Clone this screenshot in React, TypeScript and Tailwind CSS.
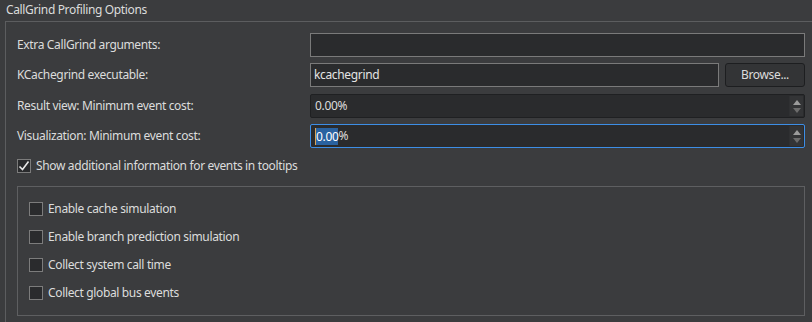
import React from "react";

const font = { fontFamily: '"Noto Sans", "Open Sans", sans-serif' };

function SpinBox({ focused, children }: { focused?: boolean; children: React.ReactNode }) {
  return (
    <div
      className={`flex h-[24px] w-[495px] items-stretch rounded-[2px] border bg-[#2a2b2d] ${
        focused ? "border-[#3d8ee6]" : "border-[#1f2022]"
      }`}
    >
      <div className="flex flex-1 items-center pl-[4px] text-[12px] text-[#dcdcdc]">{children}</div>
      <div className="my-[1px] mr-[1px] flex w-[14px] flex-col items-center justify-center gap-[3px] border-l border-[#2f3032] bg-[#333436]">
        <svg width="8" height="5" viewBox="0 0 8 5">
          <path d="M0 5 L4 0 L8 5 Z" fill="#9c9c9c" />
        </svg>
        <svg width="8" height="5" viewBox="0 0 8 5">
          <path d="M0 0 L4 5 L8 0 Z" fill="#6c6c6c" />
        </svg>
      </div>
    </div>
  );
}

function CheckBox({ checked, label }: { checked?: boolean; label: string }) {
  return (
    <div className="flex h-[14px] items-center gap-[5px]">
      <div className="flex h-[14px] w-[14px] items-center justify-center border border-[#7c7c7c] bg-[#2a2b2d]">
        {checked && (
          <svg width="12" height="12" viewBox="0 0 12 12">
            <path d="M1.5 6.5 L4.5 9.5 L10.5 1.5" stroke="#e8e8e8" strokeWidth="1.6" fill="none" />
          </svg>
        )}
      </div>
      <span className="text-[12px] tracking-[-0.35px] text-[#dcdcdc]">{label}</span>
    </div>
  );
}

export default function App() {
  return (
    <div className="h-[322px] w-[812px] overflow-hidden bg-[#3b3c3e] tracking-[-0.35px]" style={font}>
      <div className="h-[21px] pl-[6px] pt-[2px] text-[12px] leading-[16px] text-[#dcdcdc]">
        CallGrind Profiling Options
      </div>
      <div className="ml-[5px] h-[320px] w-[830px] border-l border-t border-[#5c5d5f] pl-[11px] pt-[11px]">
        <div className="flex h-[24px] items-center">
          <span className="w-[293px] text-[12px] text-[#dcdcdc]">Extra CallGrind arguments:</span>
          <div className="h-[24px] w-[495px] border border-[#7a7a7a] bg-[#2a2b2d]" />
        </div>
        <div className="mt-[6px] flex h-[24px] items-center">
          <span className="w-[293px] text-[12px] text-[#dcdcdc]">KCachegrind executable:</span>
          <div className="flex h-[24px] w-[409px] items-center border border-[#7a7a7a] bg-[#2a2b2d] pl-[3px] text-[12px] text-[#e4e4e4]">
            kcachegrind
          </div>
          <button className="ml-[6px] h-[24px] w-[80px] rounded-[3px] border border-[#1d1e20] bg-[#333436] text-[12px] text-[#dcdcdc]">
            Browse...
          </button>
        </div>
        <div className="mt-[7px] flex h-[24px] items-center">
          <span className="w-[293px] text-[12px] text-[#dcdcdc]">Result view: Minimum event cost:</span>
          <SpinBox>0.00%</SpinBox>
        </div>
        <div className="mt-[6px] flex h-[24px] items-center">
          <span className="w-[293px] text-[12px] text-[#dcdcdc]">Visualization: Minimum event cost:</span>
          <SpinBox focused>
            <span className="flex items-center">
              <span className="h-[17px] w-[1px] bg-[#d9a35a]" />
              <span className="bg-[#2a62a0] leading-[17px] text-white">0.00</span>
              <span>%</span>
            </span>
          </SpinBox>
        </div>
        <div className="mt-[11px]">
          <CheckBox checked label="Show additional information for events in tooltips" />
        </div>
        <div className="mt-[13px] flex h-[130px] w-[788px] flex-col gap-[14px] border border-[#5e5f61] pl-[11px] pt-[15px]">
          <CheckBox label="Enable cache simulation" />
          <CheckBox label="Enable branch prediction simulation" />
          <CheckBox label="Collect system call time" />
          <CheckBox label="Collect global bus events" />
        </div>
      </div>
    </div>
  );
}
